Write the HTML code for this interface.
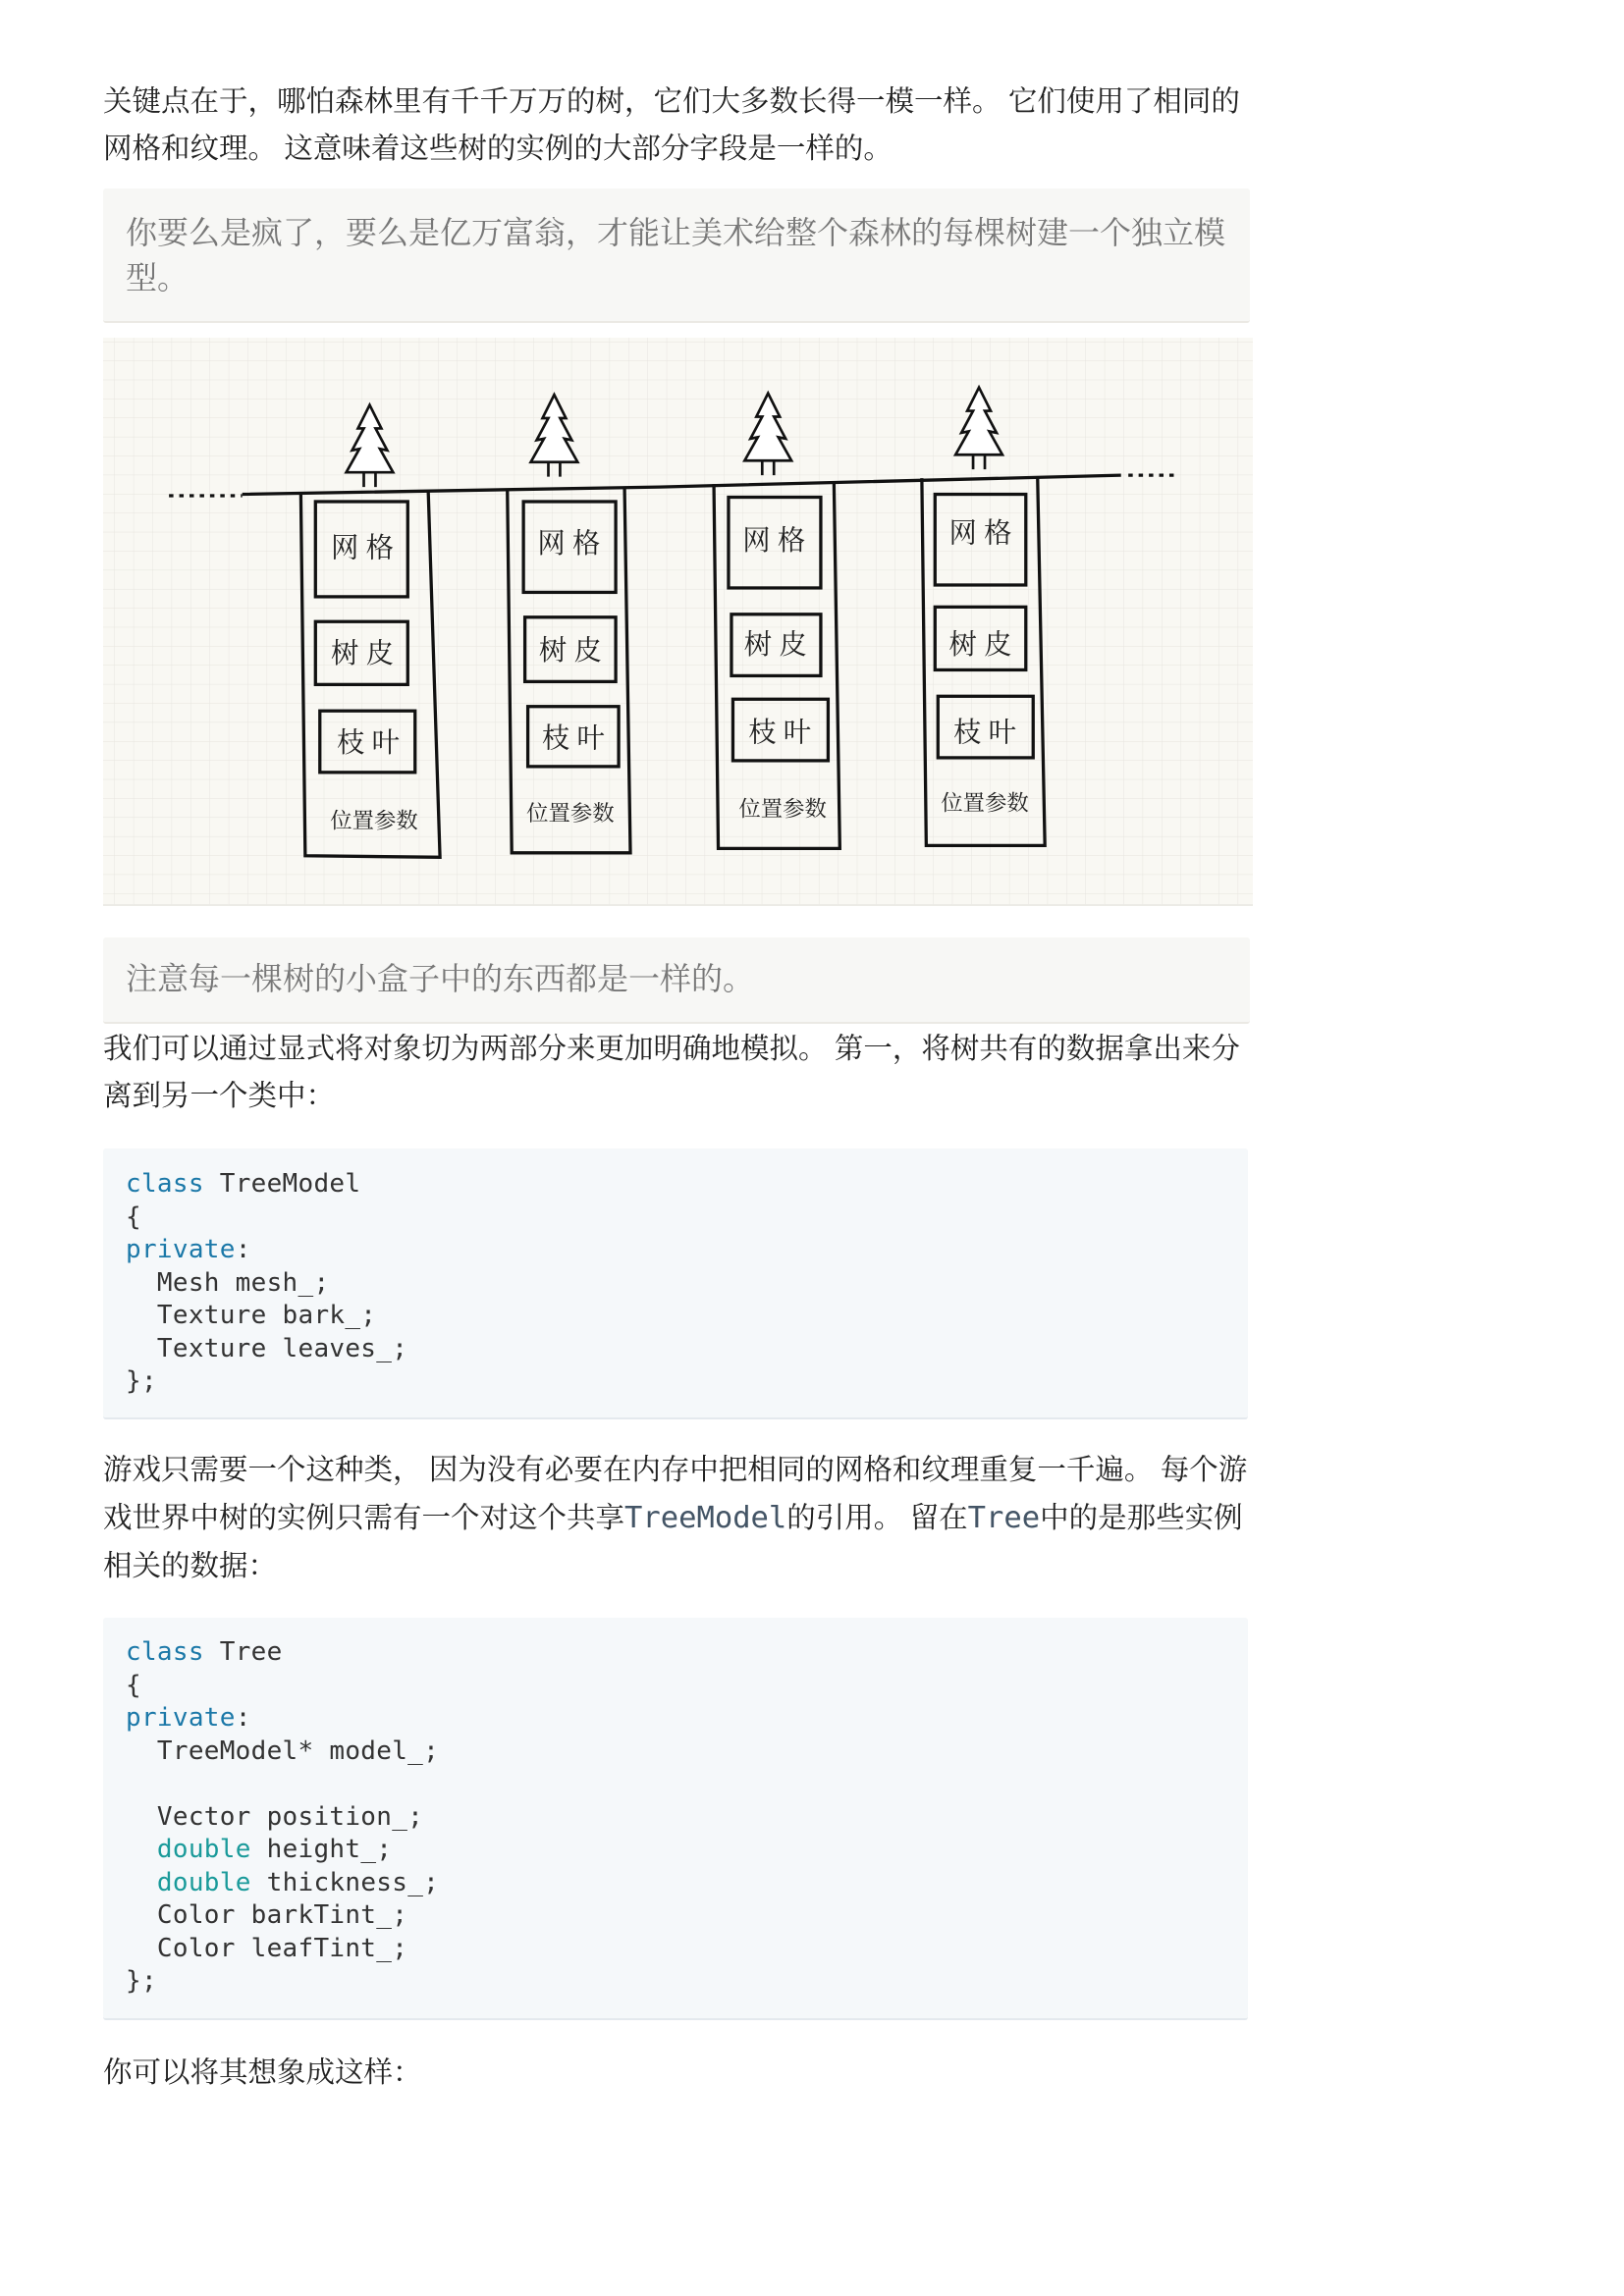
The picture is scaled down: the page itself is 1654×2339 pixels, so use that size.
<!DOCTYPE html>
<html><head><meta charset="utf-8">
<style>
body{margin:0;background:#fff;width:1654px;height:2339px;position:relative;overflow:hidden;font-family:"Liberation Serif","Noto Serif CJK SC",serif;color:#222;}
.l{position:absolute;left:105px;white-space:nowrap;font-size:29.5px;line-height:48px;}
.box{position:absolute;left:105px;width:1168px;background:#f7f7f5;border-bottom:2px solid #ebe9e4;border-radius:3px;}
.q{position:absolute;left:128px;white-space:nowrap;font-size:32px;color:#777;line-height:46px;}
.code{position:absolute;left:105px;width:1166px;background:#f5f8fa;border-bottom:2px solid #e4e9ee;border-radius:3px;}
pre{margin:0;position:absolute;left:128px;font-family:"DejaVu Sans Mono","Liberation Mono",monospace;font-size:26px;line-height:33.5px;color:#333;letter-spacing:0.3px;}
.k{color:#1b78a8}.t{color:#1a9a9a}
.m{font-family:"DejaVu Sans Mono","Liberation Mono",monospace;color:#456;font-size:30.5px;}
</style></head><body>
<div class="l" style="top:80px">关键点在于，哪怕森林里有千千万万的树，它们大多数长得一模一样。 它们使用了相同的</div>
<div class="l" style="top:128px">网格和纹理。 这意味着这些树的实例的大部分字段是一样的。</div>

<div class="box" style="top:192px;height:135px"></div>
<div class="q" style="top:214px">你要么是疯了，要么是亿万富翁，才能让美术给整个森林的每棵树建一个独立模</div>
<div class="q" style="top:260px">型。</div>

<div style="position:absolute;left:105px;top:344px;width:1171px;height:577px;background:#f9f8f3;border-bottom:2px solid #ecebe6;">
<svg width="1171" height="577" viewBox="70 231 785 387" preserveAspectRatio="none" xmlns="http://www.w3.org/2000/svg">
<defs><pattern id="g" width="13" height="13" patternUnits="userSpaceOnUse"><path d="M13 0V13M0 13H13" stroke="#e6e4de" stroke-width="0.6" fill="none"/></pattern></defs>
<rect x="70" y="231" width="785" height="387" fill="url(#g)"/>
<g stroke="#111" stroke-width="2.2" fill="none">
<path d="M115 339 H165" stroke-dasharray="3 4"/>
<path d="M165 338 L450 333 L765 325"/>
<path d="M770 325 H805" stroke-dasharray="3 4"/>
<path d="M205 337 L208 585 L300 586 L292 336"/>
<rect x="215" y="343" width="63" height="65"/><rect x="215" y="425" width="63" height="43"/><rect x="218" y="486" width="65" height="42"/>
<path d="M346 334 L349 583 L430 583 L426 333"/>
<rect x="357" y="343" width="63" height="62"/><rect x="358" y="422" width="62" height="44"/><rect x="360" y="483" width="62" height="41"/>
<path d="M487 331 L490 580 L573 580 L569 330"/>
<rect x="497" y="340" width="63" height="62"/><rect x="499" y="420" width="61" height="42"/><rect x="500" y="478" width="65" height="42"/>
<path d="M629 327 L632 578 L713 578 L708 326"/>
<rect x="638" y="338" width="62" height="62"/><rect x="638" y="415" width="62" height="43"/><rect x="640" y="476" width="65" height="42"/>
</g>
<g stroke="#111" stroke-width="1.8" fill="#fff">
<path id="tr" d="M252 277 L244 293 L248 293 L240 308 L245 307 L236 323 L268 323 L259 307 L264 308 L256 293 L260 293 Z M248 323 V333 M256 323 V333"/>
<use href="#tr" x="126" y="-7"/>
<use href="#tr" x="272" y="-8"/>
<use href="#tr" x="416" y="-12"/>
</g>
<g font-family="'Noto Serif CJK SC',serif" font-size="19" fill="#222" text-anchor="middle">
<text x="247" y="381">网 格</text><text x="247" y="453">树 皮</text><text x="251" y="514">枝 叶</text><text x="255" y="566" font-size="15">位置参数</text>
<text x="388" y="378">网 格</text><text x="389" y="451">树 皮</text><text x="391" y="511">枝 叶</text><text x="389" y="561" font-size="15">位置参数</text>
<text x="528" y="376">网 格</text><text x="529" y="447">树 皮</text><text x="532" y="507">枝 叶</text><text x="534" y="558" font-size="15">位置参数</text>
<text x="669" y="371">网 格</text><text x="669" y="447">树 皮</text><text x="672" y="507">枝 叶</text><text x="672" y="554" font-size="15">位置参数</text>
</g>
</svg></div>

<div class="box" style="top:955px;height:86px"></div>
<div class="q" style="top:974px">注意每一棵树的小盒子中的东西都是一样的。</div>

<div class="l" style="top:1045px">我们可以通过显式将对象切为两部分来更加明确地模拟。 第一，将树共有的数据拿出来分</div>
<div class="l" style="top:1093px">离到另一个类中：</div>

<div class="code" style="top:1170px;height:274px"></div>
<pre style="top:1190px"><span class="k">class</span> TreeModel
{
<span class="k">private</span>:
  Mesh mesh_;
  Texture bark_;
  Texture leaves_;
};</pre>

<div class="l" style="top:1474px">游戏只需要一个这种类， 因为没有必要在内存中把相同的网格和纹理重复一千遍。 每个游</div>
<div class="l" style="top:1523px">戏世界中树的实例只需有一个对这个共享<span class="m">TreeModel</span>的引用。 留在<span class="m">Tree</span>中的是那些实例</div>
<div class="l" style="top:1572px">相关的数据：</div>

<div class="code" style="top:1648px;height:408px"></div>
<pre style="top:1667px"><span class="k">class</span> Tree
{
<span class="k">private</span>:
  TreeModel* model_;

  Vector position_;
  <span class="t">double</span> height_;
  <span class="t">double</span> thickness_;
  Color barkTint_;
  Color leafTint_;
};</pre>

<div class="l" style="top:2088px">你可以将其想象成这样：</div>
</body></html>
